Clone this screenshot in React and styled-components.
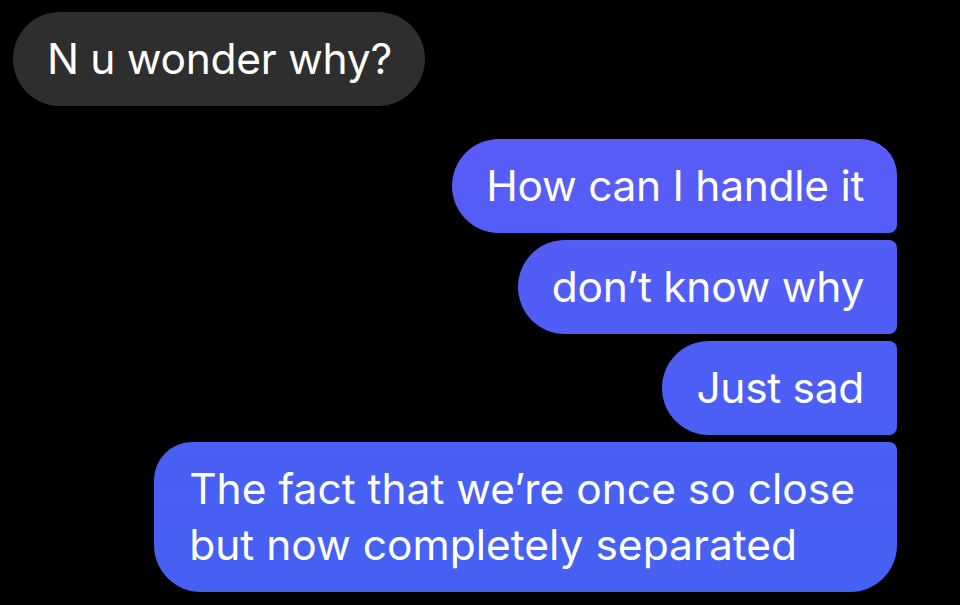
import React from 'react';
import styled, { createGlobalStyle } from 'styled-components';

const GlobalStyle = createGlobalStyle`
  html, body {
    margin: 0;
    padding: 0;
    background: #000;
  }
  body {
    font-family: Inter, "Liberation Sans", Arial, sans-serif;
    -webkit-font-smoothing: antialiased;
  }
`;

const Thread = styled.div`
  width: 960px;
  height: 605px;
  overflow: hidden;
  background: #000;
  padding: 12px 63px 0 13px;
  box-sizing: border-box;
  display: flex;
  flex-direction: column;
`;

const Row = styled.div`
  display: flex;
  justify-content: ${(p) => (p.mine ? 'flex-end' : 'flex-start')};
  margin-top: ${(p) => p.gap || 0}px;
`;

const Bubble = styled.div`
  box-sizing: border-box;
  height: 94px;
  padding: 21px 33px 0 34px;
  font-size: 42.5px;
  line-height: 52px;
  letter-spacing: -0.3px;
  color: #fff;
  white-space: pre-line;
  border-radius: 47px;
  background: #2e2e2e;
`;

const MyBubble = styled(Bubble)`
  height: ${(p) => (p.multi ? '150px' : '94px')};
  background: linear-gradient(180deg, #5d5af8 0px, #5a5cf7 140px, #4e5ef6 340px, #4461f2 605px);
  background-attachment: fixed;
  border-radius: ${(p) => p.radius};
  line-height: ${(p) => (p.multi ? '56px' : '52px')};
  letter-spacing: ${(p) => (p.multi ? '0px' : '-0.3px')};
  padding-top: ${(p) => (p.multi ? '19px' : '21px')};
  padding-left: ${(p) => (p.multi ? '35px' : '34px')};
  padding-right: ${(p) => (p.multi ? '42px' : '33px')};
`;

const messages = [
  { text: 'How can I handle it', radius: '47px 36px 8px 47px' },
  { text: 'don\u2019t know why', radius: '47px 8px 8px 47px' },
  { text: 'Just sad', radius: '47px 8px 8px 47px' },
  {
    text: 'The fact that we\u2019re once so close\nbut now completely separated',
    radius: '38px 8px 47px 47px',
    multi: true,
  },
];

export default function App() {
  return (
    <>
      <GlobalStyle />
      <Thread>
        <Row>
          <Bubble>N u wonder why?</Bubble>
        </Row>
        {messages.map((m, i) => (
          <Row mine key={i} gap={i === 0 ? 33 : 7}>
            <MyBubble radius={m.radius} multi={m.multi}>
              {m.text}
            </MyBubble>
          </Row>
        ))}
      </Thread>
    </>
  );
}
